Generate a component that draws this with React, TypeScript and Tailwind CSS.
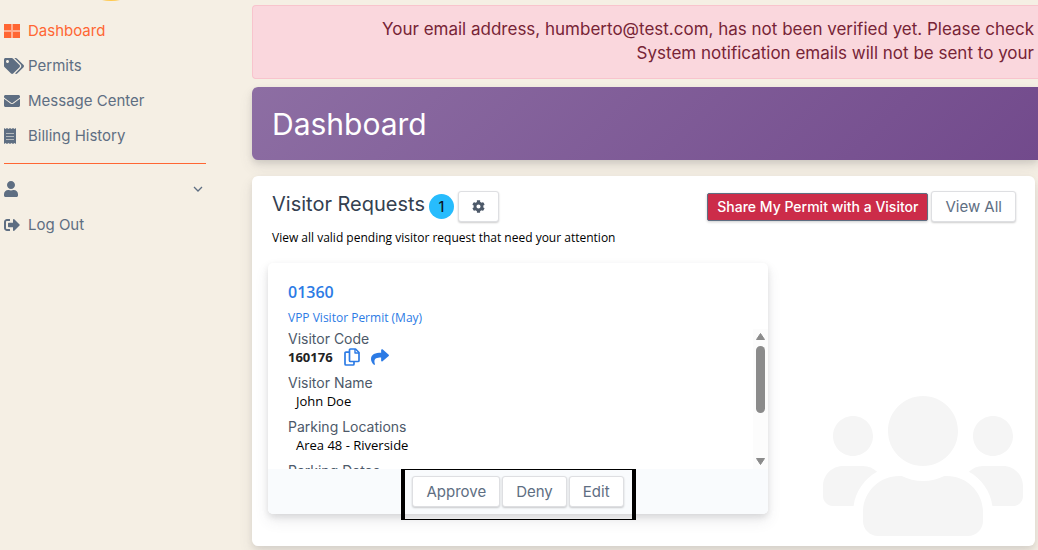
import type { ReactNode } from "react";
import { FaTags, FaEnvelope, FaUser, FaSignOutAlt, FaUsers, FaCog, FaShare } from "react-icons/fa";

const outlineButton =
  "rounded-[3px] border border-[#dedfe2] bg-white px-[13px] text-[15px] leading-[29px] text-[#5e6e82] shadow-[0_1px_2px_rgba(0,0,0,0.2)]";

function DashboardIcon() {
  return (
    <svg width="16" height="14" viewBox="0 0 16 14" aria-hidden="true">
      <path fill="#ffad90" d="M1 0h14v14H1zM0 1h16v12H0z" />
      <path fill="#ff6633" d="M0 0h7v6H0zM9 0h7v6H9zM0 8h7v6H0zM9 8h7v6H9z" />
    </svg>
  );
}

function ReceiptIcon() {
  return (
    <svg width="12" height="16" viewBox="0 0 12 16" aria-hidden="true">
      <path
        fill="currentColor"
        d="M0 0l1.500 1L3 0l1.500 1L6 0l1.500 1L9 0l1.500 1L12 0v16l-1.500-1L9 16l-1.500-1L6 16l-1.500-1L3 16l-1.500-1L0 16z"
      />
      <path stroke="#b3b8bb" d="M2 5.500h8M2 8.500h8M2 11.500h8" />
    </svg>
  );
}

function CopyIcon() {
  return (
    <svg width="16" height="18" viewBox="0 0 16 18" fill="none" stroke="currentColor" strokeWidth="1.700" strokeLinejoin="round" aria-hidden="true">
      <path d="M6.500 1h5L15 4.500v8q0 1-1 1H6.500q-1 0-1-1V2q0-1 1-1z" />
      <path d="M11 1v4h4" strokeWidth="1.400" />
      <path d="M5.500 4.200H2q-1 0-1 1V16q0 1 1 1h7q1 0 1-1v-2.500" />
    </svg>
  );
}

function NavItem({ icon, label, active = false }: { icon: ReactNode; label: string; active?: boolean }) {
  return (
    <li>
      <a href="#" className={active ? "flex items-center text-[#ff6633]" : "flex items-center text-[#5e6e82]"}>
        <span className="w-6 shrink-0">{icon}</span>
        <span className="text-[15px] leading-5">{label}</span>
      </a>
    </li>
  );
}

function Field({ label, children }: { label: string; children: ReactNode }) {
  return (
    <div className="mb-2">
      <dt className="text-sm leading-[18px] text-[#4d5969]">{label}</dt>
      <dd className="font-['Open_Sans',sans-serif] text-[13px] leading-[18px] text-black">{children}</dd>
    </div>
  );
}

function Sidebar() {
  return (
    <aside className="relative w-[252px] shrink-0 pt-[21px] pl-1">
      <svg className="absolute top-0 left-[98px]" width="26" height="1" aria-hidden="true">
        <ellipse cx="13" cy="-4" rx="15" ry="5" fill="#ffc94d" />
      </svg>
      <nav className="w-[202px]">
        <ul className="flex flex-col gap-[15px]">
          <NavItem active icon={<DashboardIcon />} label="Dashboard" />
          <NavItem icon={<FaTags className="h-4 w-5" />} label="Permits" />
          <NavItem icon={<FaEnvelope className="size-4" />} label="Message Center" />
          <NavItem icon={<ReceiptIcon />} label="Billing History" />
        </ul>
        <hr className="mt-[17px] mb-[15px] border-[#ff6633]" />
        <button type="button" aria-label="Account" className="mb-4 flex h-5 w-full items-center justify-between pr-[3px] text-[#5e6e82]">
          <FaUser className="h-4 w-[14px]" />
          <svg width="10" height="6" viewBox="0 0 10 6" fill="none" stroke="currentColor" strokeWidth="1.300" aria-hidden="true">
            <path d="M1 1l4 4 4-4" />
          </svg>
        </button>
        <ul>
          <NavItem icon={<FaSignOutAlt className="size-4" />} label="Log Out" />
        </ul>
      </nav>
    </aside>
  );
}

function RequestCard() {
  return (
    <article className="w-[500px] rounded-[5px] bg-white shadow-[0_7px_14px_rgba(65,69,88,0.1),0_3px_6px_rgba(0,0,0,0.1)]">
      <header className="px-5 pt-[17px] text-[#2c7be5]">
        <h3 className="font-['Open_Sans',sans-serif] text-base leading-6 font-semibold">
          <a href="#">01360</a>
        </h3>
        <p className="mt-1 font-['Open_Sans',sans-serif] text-xs leading-5">
          <a href="#">VPP Visitor Permit (May)</a>
        </p>
      </header>
      <div className="mt-px flex h-[140px] pl-5">
        <dl className="min-w-0 grow overflow-hidden pt-px">
          <Field label="Visitor Code">
            <span className="flex items-center">
              <strong className="text-[13px] leading-[18px] font-bold text-[#222]">160176</strong>
              <button type="button" aria-label="Copy code" className="ml-[11px] text-[#2c7be5]">
                <CopyIcon />
              </button>
              <button type="button" aria-label="Share code" className="ml-[11px] text-[#2c7be5]">
                <FaShare className="size-[18px]" />
              </button>
            </span>
          </Field>
          <Field label="Visitor Name"><span className="pl-2">John Doe</span></Field>
          <Field label="Parking Locations"><span className="pl-2">Area 48 - Riverside</span></Field>
          <Field label="Parking Dates">{null}</Field>
        </dl>
        <svg className="w-[15px] shrink-0" viewBox="0 0 15 140" aria-hidden="true">
          <path fill="#fcfcfc" d="M0 0h15v140H0z" />
          <path fill="#8b8b8b" stroke="#8b8b8b" strokeLinejoin="round" d="M3.500 10.500h8L7.500 4.500zM3.500 129.500h8l-4 6z" />
          <rect x="3" y="17" width="9" height="67" rx="4.500" fill="#8b8b8b" />
        </svg>
      </div>
      <footer className="relative flex h-[45px] justify-center rounded-b-[5px] bg-[#f9fbfd]">
        <div className="absolute -bottom-1.5 h-[51px] w-[235px] border-x-4 border-y border-black" />
        <div className="relative flex items-center gap-0.5">
          <button type="button" className={outlineButton}>Approve</button>
          <button type="button" className={outlineButton}>Deny</button>
          <button type="button" className={outlineButton}>Edit</button>
        </div>
      </footer>
    </article>
  );
}

export default function App() {
  return (
    <div className="flex min-h-screen overflow-hidden bg-[#f5efe4] font-[Inter,sans-serif]">
      <Sidebar />
      <main className="min-w-0 grow pt-[5px]">
        <div role="alert" className="flex h-[74px] flex-col items-end rounded-l border border-r-0 border-[#f8c4cd] bg-[#fad7dd] pt-[11px] pr-1 text-[17px] leading-6 whitespace-nowrap text-[#772436]">
          <p>Your email address, humberto@test.com, has not been verified yet. Please check </p>
          <p>System notification emails will not be sent to your </p>
        </div>
        <div className="mt-2 flex h-[73px] items-center rounded-l-[6px] bg-linear-[135deg,#8d6ea3,#724a8c] px-5 shadow-[0_7px_14px_rgba(65,69,88,0.1),0_3px_6px_rgba(0,0,0,0.1)]">
          <h1 className="text-[30px] leading-9 text-white">Dashboard</h1>
        </div>
        <section className="relative mt-4 mr-[3px] rounded-[6px] bg-white px-4 pt-[15px] pb-8 shadow-[0_7px_14px_rgba(65,69,88,0.1),0_3px_6px_rgba(0,0,0,0.07)]">
          <FaUsers className="absolute right-3 bottom-0 h-[160px] w-[200px] text-[#f5f5f5]" />
          <div className="flex items-center justify-between pr-[3px] pl-1">
            <div className="flex items-center">
              <h2 className="self-start text-xl leading-[26px] text-[#344050]">Visitor Requests</h2>
              <span className="ml-1 flex size-[25px] items-center justify-center rounded-full bg-[#27bcfd] text-sm font-medium text-[#0b1727]">1</span>
              <button type="button" aria-label="Settings" className="ml-1 flex h-[31px] w-[41px] items-center justify-center rounded-[3px] border border-[#dedfe2] bg-white text-[#4d5969] shadow-[0_1px_2px_rgba(0,0,0,0.2)]">
                <FaCog className="size-[13px]" />
              </button>
            </div>
            <div className="flex items-center gap-[3px]">
              <button type="button" className="rounded-[2px] border border-[#5e6e82] bg-[#cc2c49] px-[9px] text-sm leading-[26px] font-medium text-white shadow-[0_1px_3px_rgba(0,0,0,0.2)]">
                Share My Permit with a Visitor
              </button>
              <button type="button" className={outlineButton}>View All</button>
            </div>
          </div>
          <p className="mt-1.5 mb-[15px] pl-1 font-['Open_Sans',sans-serif] text-xs leading-5 text-black">
            View all valid pending visitor request that need your attention
          </p>
          <div className="relative">
            <RequestCard />
          </div>
        </section>
      </main>
    </div>
  );
}
